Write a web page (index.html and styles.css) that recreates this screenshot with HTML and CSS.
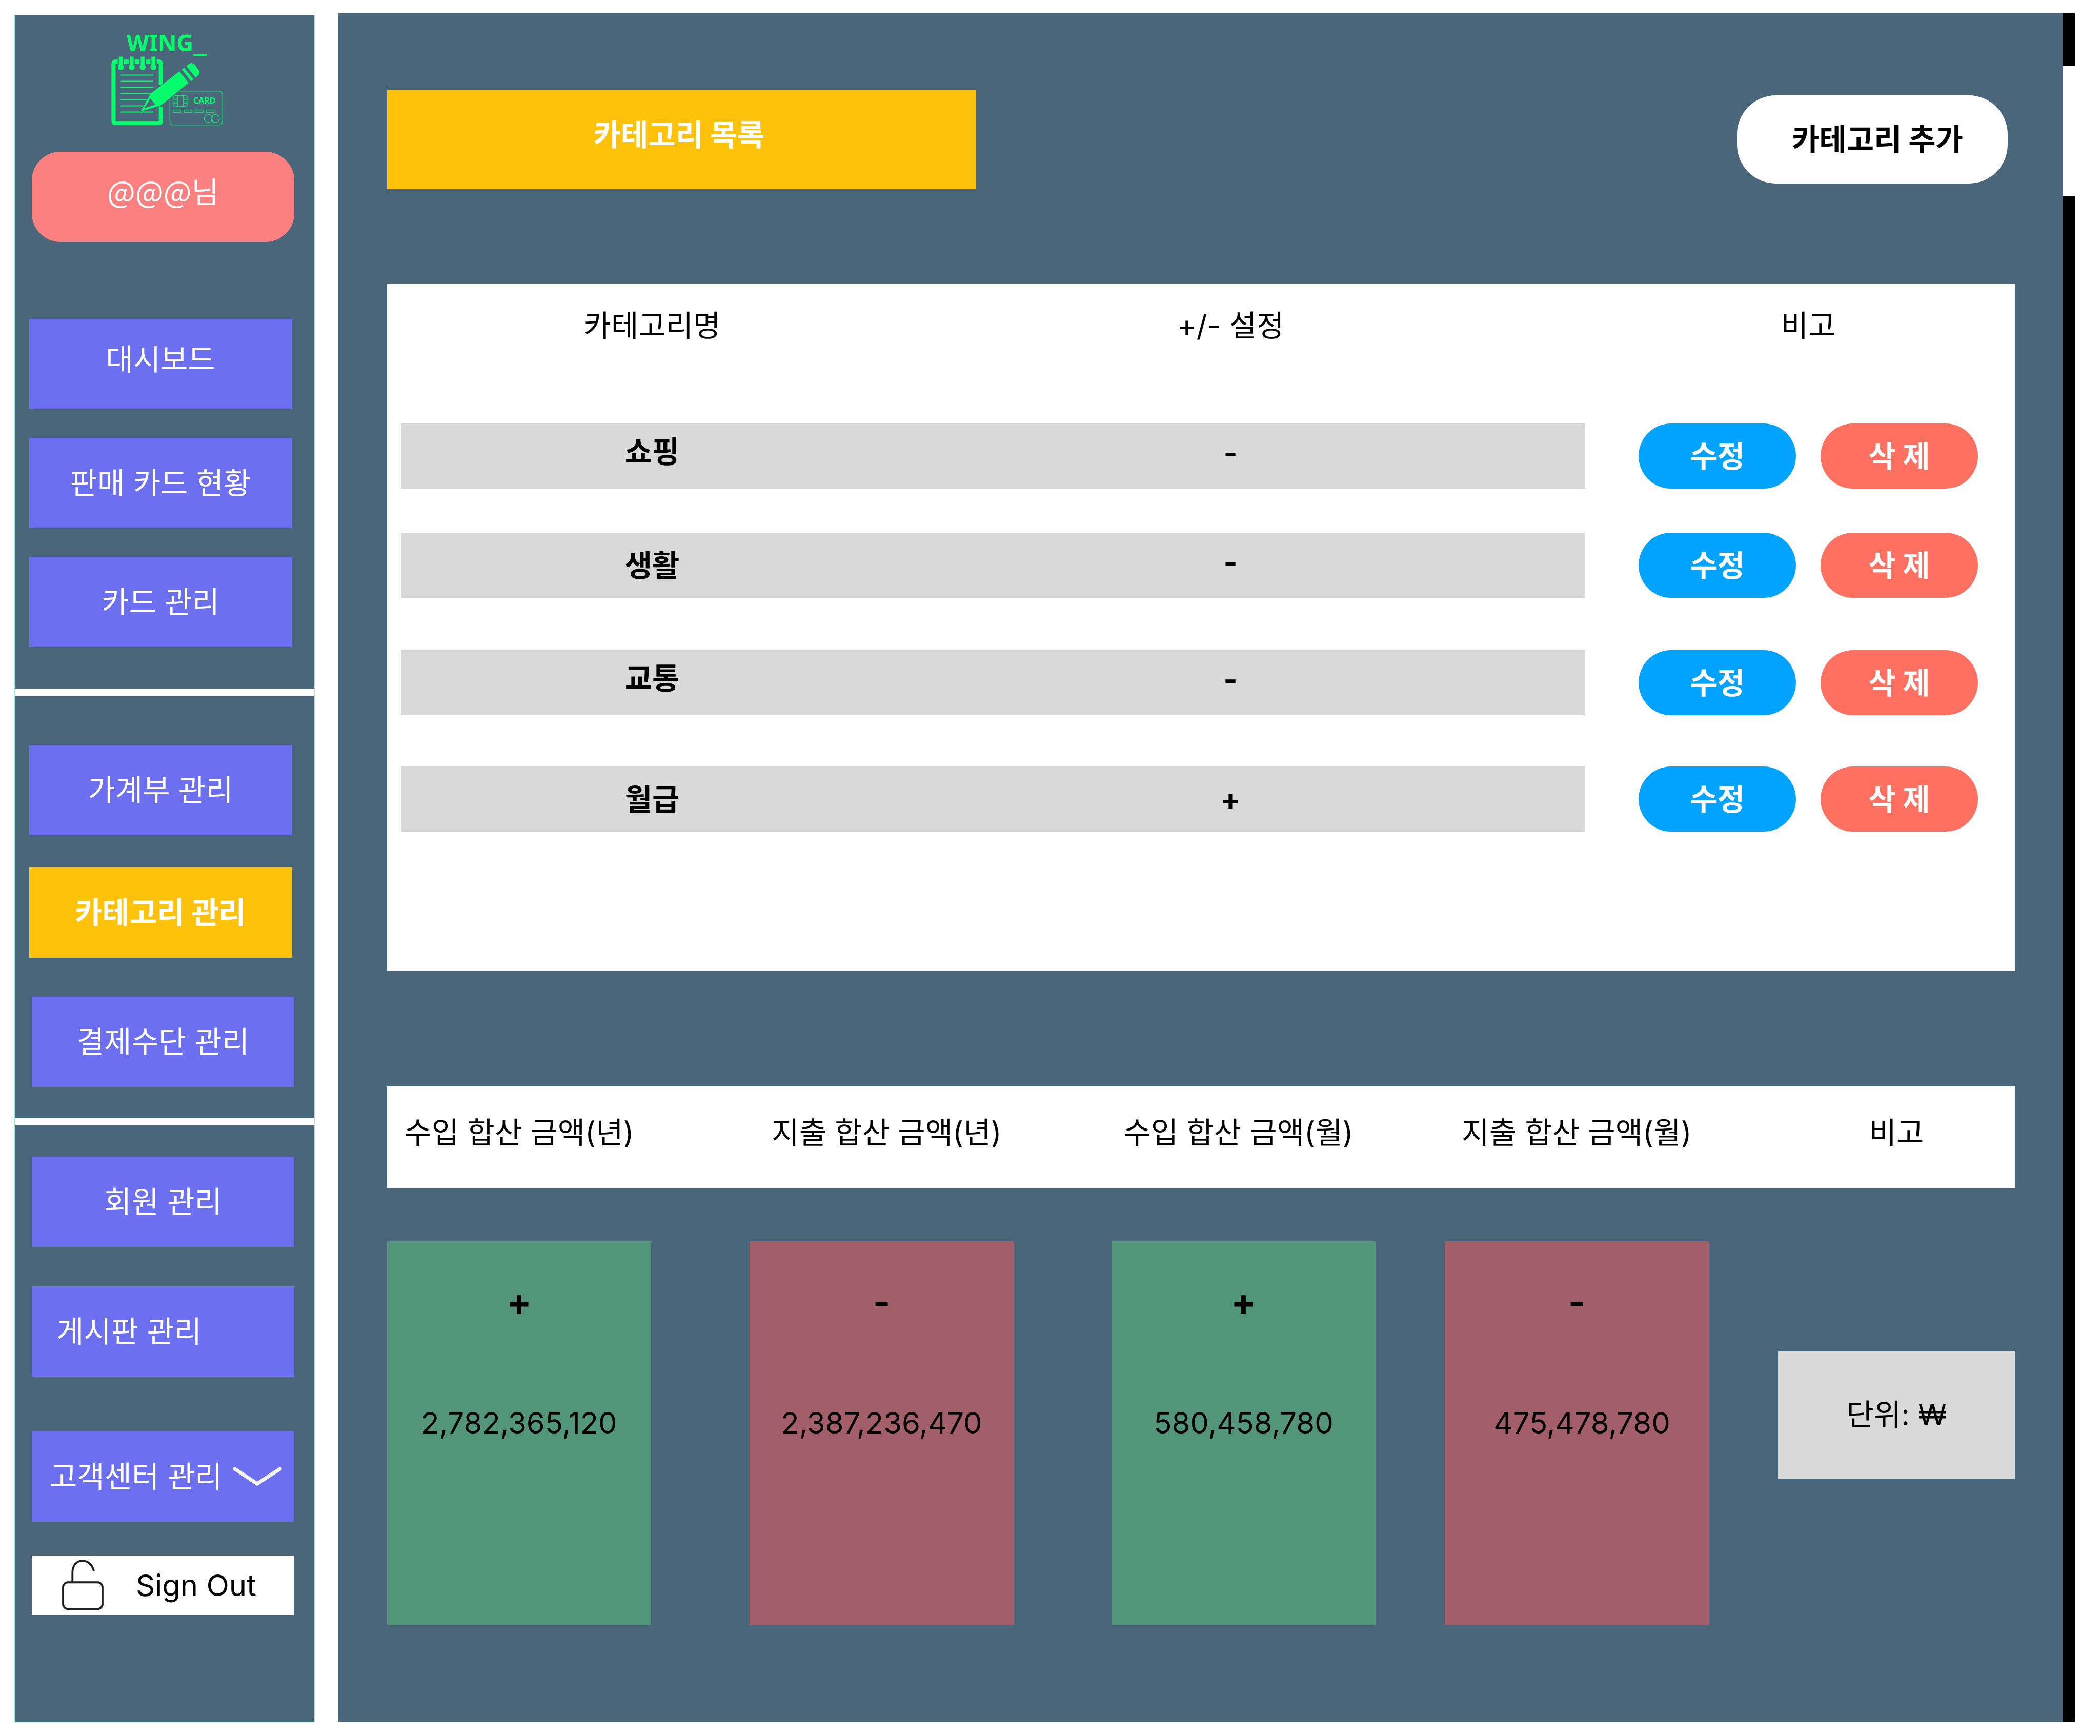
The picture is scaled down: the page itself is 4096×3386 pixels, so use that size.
FILE: index.html
```html
<!DOCTYPE html>
<html lang="ko">
<head>
<meta charset="utf-8">
<meta name="viewport" content="width=device-width, initial-scale=1">
<title>WING_ 카테고리 관리</title>
<link rel="stylesheet" href="styles.css">
</head>
<body>
<div class="layout">
  <aside class="sidebar">
    <div class="section section-top">
      <svg class="logo" viewBox="213 40 228 210" role="img" aria-label="WING_">
        <text class="logo-name" x="247" y="100">WING<tspan class="logo-cursor" dy="-2">_</tspan></text>
        <g class="logo-line logo-pad">
          <path d="M229.700 120.200H225.400Q221.400 120.200 221.400 124.200V236.300Q221.400 240.300 225.400 240.300H309.700Q313.700 240.300 313.700 236.300V208"/>
          <path d="M305.800 120.200H309.700Q313.700 120.200 313.700 124.200V166"/>
          <path d="M241.800 120.200h9.200M262.700 120.200h9.600M284 120.200h9.200"/>
        </g>
        <g class="logo-line logo-ring"><path d="M235.600 110.500V130M256.900 110.500V130M278.200 110.500V130M299.200 110.500V130"/></g>
        <g class="logo-fill">
          <circle cx="235.600" cy="131" r="5.800"/><circle cx="256.900" cy="131" r="5.800"/><circle cx="278.200" cy="131" r="5.800"/><circle cx="299.200" cy="131" r="5.800"/>
        </g>
        <path class="logo-line logo-rule" d="M235.600 146.500H299M235.600 158.500H299M235.600 170.500H299M235.600 182.500H299M235.600 194.500H299M235.600 206.500H299M235.600 218.500H299"/>
        <g class="logo-line logo-card">
          <path d="M346 177.800H426Q434.200 177.800 434.200 186V235.500Q434.200 243.700 426 243.700H339.500Q331.300 243.700 331.300 235.500V189"/>
          <rect x="337.500" y="186.200" width="29" height="21.500" rx="6"/>
          <rect x="347" y="186.200" width="10.500" height="21.500"/>
          <path d="M337.500 191.500h9.500M337.500 195h9.500M337.500 198.500h9.500M337.500 202h9.500M357.500 191.500h9M357.500 195h9M357.500 198.500h9M357.500 202h9"/>
          <path d="M337.500 214.500h15.500v4.800h-15.500zM359 214.500h15.500v4.800H359zM380.500 214.500H396v4.800h-15.500zM402 214.500h15.500v4.800H402z"/>
          <path d="M413.200 227.500A7.800 7.800 0 1 0 413.200 235M413.200 227.500A7.800 7.800 0 1 1 413.200 235M411.500 225.500Q414.500 231 411.500 237M415 225.500Q412 231 415 237"/>
        </g>
        <text class="logo-card-name" x="377" y="202">CARD</text>
        <path class="logo-pencil" d="M350 139L367.600 161.800L314 205.500Q312 207 305.800 208L274.400 217L293 184Q294 182 297.400 180Z"/>
        <path class="logo-hole" d="M293.200 191.700L302.800 204L281 211.500Z"/>
        <path class="logo-fill" d="M354.600 135.200L359.200 132.200L377.200 154.700L372.600 158.500Z"/>
        <path class="logo-fill" d="M363.800 129.300L367.500 125.500Q373 120.500 379.300 125.500L387 136Q391 141.500 387.500 146L381.800 151.400Z"/>
      </svg>
      <p class="profile">@@@님</p>
      <ul class="nav">
        <li><a class="nav-item raised" href="#dashboard">대시보드</a></li>
        <li><a class="nav-item" href="#card-sales">판매 카드 현황</a></li>
        <li><a class="nav-item" href="#cards">카드 관리</a></li>
      </ul>
    </div>
    <div class="section section-book">
      <ul class="nav">
        <li><a class="nav-item" href="#book">가계부 관리</a></li>
        <li><a class="nav-item nav-item-active" href="#categories" aria-current="page">카테고리 관리</a></li>
        <li class="indented"><a class="nav-item" href="#payments">결제수단 관리</a></li>
      </ul>
    </div>
    <div class="section section-admin">
      <ul class="nav">
        <li><a class="nav-item" href="#members">회원 관리</a></li>
        <li><a class="nav-item nav-item-start" href="#boards">게시판 관리</a></li>
        <li><a class="nav-item nav-item-menu" href="#support">고객센터 관리
          <svg class="chevron" viewBox="0 0 96 40" aria-hidden="true"><path d="M4 5L47.500 34L92 5"/></svg></a></li>
      </ul>
      <button class="sign-out" type="button">
        <svg class="lock" viewBox="0 0 84 104" aria-hidden="true"><rect x="2" y="46" width="80" height="54" rx="10"/><path d="M21 46V26C21 -4 57 -6 64 22"/></svg>
        Sign Out
      </button>
    </div>
  </aside>

  <main class="content">
    <header class="page-head">
      <h1 class="page-title raised">카테고리 목록</h1>
      <button class="add-button nudge-right" type="button">카테고리 추가</button>
    </header>

    <section class="panel">
      <table class="categories">
        <colgroup><col class="col-name"><col><col class="col-actions"></colgroup>
        <thead>
          <tr><th scope="col">카테고리명</th><th class="sign" scope="col">+/- 설정</th><th class="actions-head" scope="col">비고</th></tr>
        </thead>
        <tbody>
          <tr><td class="filled raised">쇼핑</td><td class="filled sign minus">-</td><td><div class="actions"><button class="pill edit" type="button">수정</button><button class="pill delete" type="button">삭 제</button></div></td></tr>
          <tr><td class="filled">생활</td><td class="filled sign minus">-</td><td><div class="actions"><button class="pill edit" type="button">수정</button><button class="pill delete" type="button">삭 제</button></div></td></tr>
          <tr><td class="filled raised">교통</td><td class="filled sign minus">-</td><td><div class="actions"><button class="pill edit" type="button">수정</button><button class="pill delete" type="button">삭 제</button></div></td></tr>
          <tr><td class="filled">월급</td><td class="filled sign">+</td><td><div class="actions"><button class="pill edit" type="button">수정</button><button class="pill delete" type="button">삭 제</button></div></td></tr>
        </tbody>
      </table>
    </section>

    <table class="totals">
      <thead>
        <tr class="totals-row totals-head">
          <th scope="col">수입 합산 금액(년)</th>
          <th class="nudge-right" scope="col">지출 합산 금액(년)</th>
          <th class="nudge-left" scope="col">수입 합산 금액(월)</th>
          <th scope="col">지출 합산 금액(월)</th>
          <th class="note" scope="col">비고</th>
        </tr>
      </thead>
      <tbody>
        <tr class="totals-row">
          <td class="total income"><span class="total-sign">+</span><span>2,782,365,120</span></td>
          <td class="total expense"><span class="total-sign">-</span><span>2,387,236,470</span></td>
          <td class="total income"><span class="total-sign">+</span><span>580,458,780</span></td>
          <td class="total expense"><span class="total-sign">-</span><span class="nudge-right">475,478,780</span></td>
          <td class="note unit">단위: ₩</td>
        </tr>
      </tbody>
    </table>
  </main>

  <div class="scrollbar" aria-hidden="true"><div class="scrollbar-thumb"></div></div>
</div>
</body>
</html>
```
FILE: styles.css
```css
:root {
  --slate: #4a667a;
  --violet: #6c70f0;
  --amber: #ffc20a;
  --grey: #d9d9d9;
  --green: #05ff6c;
}

* {
  box-sizing: border-box;
}

body {
  margin: 0;
  background: #fff;
  color: #000;
  font: 400 58px/72px Inter, "Noto Sans CJK KR", sans-serif;
}

h1, p, ul {
  margin: 0;
  padding: 0;
}

ul {
  list-style: none;
}

a {
  color: inherit;
  text-decoration: none;
}

button {
  border: 0;
  padding: 0;
  font: inherit;
  color: inherit;
}

table {
  border-spacing: 0;
}

th, td {
  padding: 0;
  font-weight: 400;
  text-align: center;
}

.layout {
  display: flex;
  min-height: 100vh;
  padding: 25px 49px 27px 28px;
}

/* Text that sits above the middle of its box */
.raised {
  padding-bottom: 18px;
}

.nudge-right {
  padding-left: 20px;
}

.nudge-left {
  padding-right: 20px;
}

/* Sidebar */
.sidebar {
  display: flex;
  flex-direction: column;
  gap: 14px;
  flex: 0 0 586px;
  margin: 4px 46px 0 0;
  border: 1px solid #8ef0e4;
  background: #fff;
}

.section {
  background: var(--slate);
  color: #fff;
}

.section-top {
  padding: 10px 44px 81px 28px;
}

.section-book {
  padding: 96px 44px 61px 28px;
}

.section-admin {
  flex: 1;
  padding: 61px 39px 61px 33px;
}

.logo {
  display: block;
  width: 228px;
  height: 210px;
  margin: 0 auto 46px 156px;
  overflow: visible;
}

.logo-name,
.logo-card-name {
  fill: var(--green);
  font: 700 45px "Noto Sans", sans-serif;
}

.logo-card-name {
  font-size: 16px;
}

.logo-cursor {
  font: 700 52px "DejaVu Sans", sans-serif;
}

.logo-line {
  fill: none;
  stroke: var(--green);
}

.logo-pad {
  stroke-width: 8;
}

.logo-ring {
  stroke-width: 7.5;
}

.logo-rule {
  stroke-width: 2;
}

.logo-card {
  stroke-width: 1.5;
  opacity: 0.75;
}

.logo-fill {
  fill: var(--green);
}

.logo-pencil {
  fill: var(--green);
  stroke: var(--slate);
  stroke-width: 2;
  paint-order: stroke;
}

.logo-hole {
  fill: var(--slate);
}

.profile {
  display: flex;
  align-items: center;
  justify-content: center;
  height: 176px;
  margin: 0 -5px 150px 5px;
  padding-bottom: 26px;
  border-radius: 56px;
  background: #fd8080;
  font-family: "Noto Sans CJK KR", sans-serif;
}

.nav {
  display: flex;
  flex-direction: column;
}

.section-top .nav {
  gap: 56px;
}

.section-book .nav {
  gap: 63px;
}

.section-admin .nav {
  gap: 77px;
}

.section-book .indented {
  margin: 13px -5px 0 5px;
}

.section-admin li:last-child {
  margin-top: 30px;
}

.nav-item {
  display: flex;
  align-items: center;
  justify-content: center;
  height: 176px;
  background: var(--violet);
}

.nav-item-active {
  background: var(--amber);
  font-weight: 700;
}

.nav-item-start {
  justify-content: flex-start;
  padding-left: 48px;
}

.nav-item-menu {
  justify-content: space-between;
  padding: 0 24px 0 35px;
}

.chevron {
  width: 96px;
  height: 40px;
  fill: none;
  stroke: #f5f5f5;
  stroke-width: 7;
  stroke-linecap: round;
}

.sign-out {
  display: flex;
  align-items: center;
  gap: 63px;
  width: 100%;
  height: 116px;
  margin-top: 66px;
  padding-left: 59px;
  background: #fff;
  color: #000;
}

.lock {
  width: 81px;
  height: 100px;
  fill: none;
  stroke: #1e1e1e;
  stroke-width: 4;
  stroke-linecap: round;
}

/* Main column */
.content {
  flex: 1;
  min-width: 0;
  padding: 150px 94px 189px 95px;
  background: var(--slate);
}

.page-head {
  display: flex;
  align-items: center;
  justify-content: space-between;
  margin-bottom: 184px;
  padding-right: 14px;
}

.page-title {
  display: flex;
  align-items: center;
  justify-content: center;
  width: 1149px;
  height: 194px;
  padding-right: 10px;
  background: var(--amber);
  color: #fff;
  font-size: 58px;
  font-weight: 700;
}

.add-button {
  width: 528px;
  height: 172px;
  border-radius: 76px;
  background: #fff;
  font-weight: 700;
}

.panel {
  margin-bottom: 226px;
  padding: 0 0 171px 27px;
  background: #fff;
}

.categories {
  width: 100%;
  table-layout: fixed;
}

.col-name {
  width: 980px;
}

.col-actions {
  width: 838px;
}

.categories th {
  height: 273px;
  padding-top: 46px;
  vertical-align: top;
}

.categories td {
  height: 227px;
  border-bottom: 100px solid transparent;
  background-clip: padding-box;
  font-weight: 700;
}

.categories tbody tr:first-child td {
  height: 213px;
  border-bottom-width: 86px;
}

.categories tbody tr:nth-child(2) td {
  height: 229px;
  border-bottom-width: 102px;
}

.categories .filled {
  background-color: var(--grey);
}

.categories .sign {
  padding-right: 54px;
}

.categories .minus {
  padding-bottom: 14px;
}

.categories .actions-head {
  padding-left: 32px;
}

.actions {
  display: flex;
  justify-content: center;
  gap: 48px;
  padding-left: 32px;
}

.pill {
  width: 307px;
  height: 127px;
  border-radius: 64px;
  color: #fff;
  font-weight: 700;
}

.edit {
  background: #00a3ff;
}

.delete {
  background: #ff7061;
}

/* Yearly and monthly totals */
.totals {
  display: block;
}

.totals thead,
.totals tbody {
  display: block;
}

.totals-row {
  display: grid;
  grid-template-columns: 707fr 706fr 650fr 650fr 462fr;
  align-items: start;
}

.totals-row > * {
  width: 515px;
}

.totals-row > .note {
  width: auto;
}

.totals-head {
  height: 198px;
  margin-bottom: 104px;
  padding-top: 54px;
  background: #fff;
}

.total {
  display: flex;
  flex-direction: column;
  gap: 164px;
  height: 749px;
  padding-top: 82px;
}

.total-sign {
  font-size: 72px;
  font-weight: 700;
}

.income {
  background: #539578;
}

.expense {
  background: #a25e69;
}

.unit {
  height: 249px;
  margin-top: 214px;
  padding-top: 88px;
  background: var(--grey);
}

/* Scroll track beside the page */
.scrollbar {
  flex: 0 0 23px;
  padding-top: 103px;
  background: #000;
}

.scrollbar-thumb {
  height: 255px;
  background: #fff;
}
```
